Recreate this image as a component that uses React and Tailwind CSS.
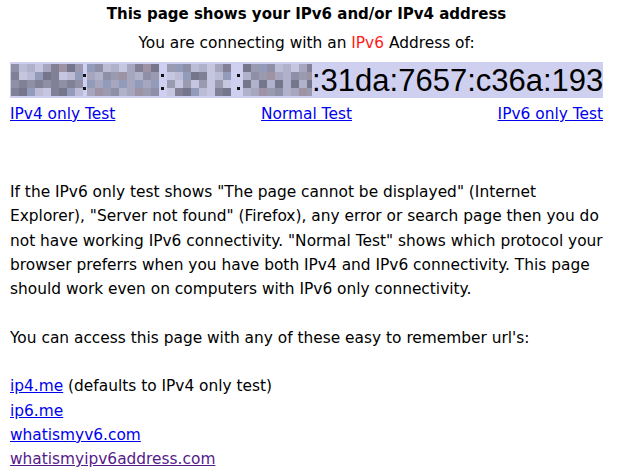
import React from "react";

const palette = ["#8f8fa8", "#75758c", "#a6a6bf", "#bcbcd6", "#9a9ab0", "#818097", "#b0b2cc", "#929bb9", "#9d93a4", "#c6c6e0"];

// blurred-out part of the address, drawn as a mosaic
function Mosaic() {
  const segments = [
    { x: 1, cols: 9 },
    { x: 77, cols: 9 },
    { x: 157, cols: 8 },
    { x: 233, cols: 9 },
  ];
  const colons = [73, 151, 227, 305];
  const cells = [];
  segments.forEach((s, si) => {
    for (let c = 0; c < s.cols; c++) {
      for (let r = 0; r < 4; r++) {
        const i = (si * 7 + c * 3 + r * 5 + c * r) % palette.length;
        cells.push(<rect key={`${si}-${c}-${r}`} x={s.x + c * 8} y={2 + r * 8} width="8" height="8" fill={palette[i]} />);
      }
    }
  });
  return (
    <svg width="302" height="36" viewBox="0 0 302 36" className="shrink-0">
      {cells}
      {colons.map((x) => (
        <g key={x}>
          <rect x={x} y="12" width="3" height="3" fill="#111" />
          <rect x={x} y="25" width="3" height="3" fill="#111" />
        </g>
      ))}
    </svg>
  );
}

export default function App() {
  return (
    <div className="min-h-screen bg-white text-black pl-[10px] pr-[14px] font-['DejaVu_Sans',sans-serif] text-[15.4px]">
      <h1 className="text-center font-bold text-[15px] pt-[5px] leading-[18px]">This page shows your IPv6 and/or IPv4 address</h1>
      <p className="text-center mt-[11px] leading-[18px]">
        You are connecting with an <span className="text-[#ff1a1a]">IPv6</span> Address of:
      </p>

      {/* address box */}
      <div className="mt-[10px] h-[36px] bg-[#cfd0ef] flex items-center">
        <Mosaic />
        <span className="font-['Liberation_Sans',Arial,sans-serif] text-[31px] leading-none">:31da:7657:c36a:193</span>
      </div>

      <div className="flex justify-between mt-[7px] leading-[18px]">
        <a href="#" className="text-[#0000ee] underline">IPv4 only Test</a>
        <a href="#" className="text-[#0000ee] underline">Normal Test</a>
        <a href="#" className="text-[#0000ee] underline">IPv6 only Test</a>
      </div>

      <p className="mt-[57px] leading-[24.3px]">
        If the IPv6 only test shows "The page cannot be displayed" (Internet Explorer), "Server not found" (Firefox), any
        error or search page then you do not have working IPv6 connectivity. "Normal Test" shows which protocol your
        browser preferrs when you have both IPv4 and IPv6 connectivity. This page should work even on computers with IPv6
        only connectivity.
      </p>

      <p className="mt-[24.3px] leading-[24.3px]">You can access this page with any of these easy to remember url's:</p>

      <div className="mt-[24.3px] leading-[24.3px]">
        <div>
          <a href="#" className="text-[#0000ee] underline">ip4.me</a> (defaults to IPv4 only test)
        </div>
        <div>
          <a href="#" className="text-[#0000ee] underline">ip6.me</a>
        </div>
        <div>
          <a href="#" className="text-[#0000ee] underline">whatismyv6.com</a>
        </div>
        <div>
          <a href="#" className="text-[#551a8b] underline">whatismyipv6address.com</a>
        </div>
      </div>
    </div>
  );
}
